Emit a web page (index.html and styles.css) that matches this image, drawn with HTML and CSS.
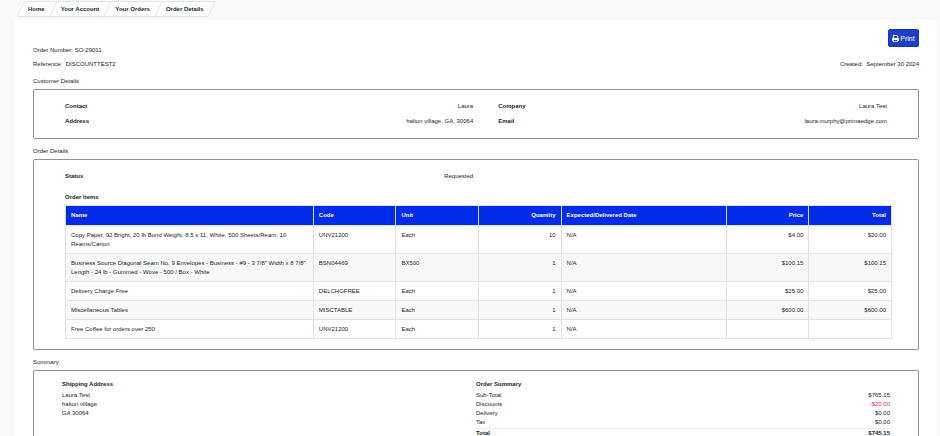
FILE: index.html
```html
<!DOCTYPE html>
<html lang="en">
<head>
  <meta charset="UTF-8" />
  <meta name="viewport" content="width=device-width, initial-scale=1.0"/>
  <title>Order Details</title>
  <link rel="stylesheet" href="styles.css">
</head>
<body>
  <nav class="breadcrumb">
    <a href="#">Home</a>
    <a href="#">Your Account</a>
    <a href="#">Your Orders</a>
    <a href="#">Order Details</a>
  </nav>

  <main class="page">
    <div class="toolbar">
      <button type="button" class="print-btn">
        <svg viewBox="0 0 16 16" fill="currentColor">
          <path fill-rule="evenodd" d="M2 7V2q0-2 2-2h7.500L14 2.500V7h-2V3.500L10.500 2H4v5zM2 7h12q2 0 2 2v4h-2v3H2v-3H0V9q0-2 2-2zm2 4.500V14h8v-2.500z"/>
        </svg>
        Print
      </button>
    </div>

    <div class="order-info">
      <div>Order Number: SO-29011</div>
      <div class="info-row">
        <span>Reference: &nbsp;DISCOUNTTEST2</span>
        <span>Created: &nbsp;September 30 2024</span>
      </div>
    </div>

    <h2 class="section-title">Customer Details</h2>
    <section class="box customer">
      <dl class="details">
        <div><dt>Contact</dt><dd>Laura</dd></div>
        <div><dt>Company</dt><dd>Laura Test</dd></div>
        <div><dt>Address</dt><dd>halton village, GA, 30064</dd></div>
        <div><dt>Email</dt><dd>laura.murphy@primaedge.com</dd></div>
      </dl>
    </section>

    <h2 class="section-title">Order Details</h2>
    <section class="box order">
      <dl class="details">
        <div><dt>Status</dt><dd>Requested</dd></div>
      </dl>
      <h3 class="items-title">Order Items</h3>
      <table class="items">
        <thead>
          <tr>
            <th class="col-name">Name</th>
            <th>Code</th>
            <th>Unit</th>
            <th class="num">Quantity</th>
            <th class="col-date">Expected/Delivered Date</th>
            <th class="num">Price</th>
            <th class="num">Total</th>
          </tr>
        </thead>
        <tbody>
          <tr>
            <td>Copy Paper, 92 Bright, 20 lb Bond Weight, 8.5 x 11, White, 500 Sheets/Ream, 10 Reams/Carton</td>
            <td>UNV21200</td>
            <td>Each</td>
            <td class="num">10</td>
            <td>N/A</td>
            <td class="num">$4.00</td>
            <td class="num">$20.00</td>
          </tr>
          <tr>
            <td>Business Source Diagonal Seam No. 9 Envelopes - Business - #9 - 3 7/8" Width x 8 7/8" Length - 24 lb - Gummed - Wove - 500 / Box - White</td>
            <td>BSN04469</td>
            <td>BX500</td>
            <td class="num">1</td>
            <td>N/A</td>
            <td class="num">$100.15</td>
            <td class="num">$100.15</td>
          </tr>
          <tr>
            <td>Delivery Charge Free</td>
            <td>DELCHGFREE</td>
            <td>Each</td>
            <td class="num">1</td>
            <td>N/A</td>
            <td class="num">$25.00</td>
            <td class="num">$25.00</td>
          </tr>
          <tr>
            <td>Miscellaneous Tables</td>
            <td>MISCTABLE</td>
            <td>Each</td>
            <td class="num">1</td>
            <td>N/A</td>
            <td class="num">$600.00</td>
            <td class="num">$600.00</td>
          </tr>
          <tr>
            <td>Free Coffee for orders over 250</td>
            <td>UNV21200</td>
            <td>Each</td>
            <td class="num">1</td>
            <td>N/A</td>
            <td class="num"></td>
            <td class="num"></td>
          </tr>
        </tbody>
      </table>
    </section>

    <h2 class="section-title">Summary</h2>
    <section class="box summary">
      <div>
        <h3>Shipping Address</h3>
        <address>Laura Test<br/>halton village<br/>GA 30064</address>
      </div>
      <div>
        <h3>Order Summary</h3>
        <dl class="totals">
          <div><dt>Sub-Total</dt><dd>$765.15</dd></div>
          <div><dt>Discounts</dt><dd class="discount">-$20.00</dd></div>
          <div><dt>Delivery</dt><dd>$0.00</dd></div>
          <div><dt>Tax</dt><dd>$0.00</dd></div>
          <div class="grand"><dt>Total</dt><dd>$745.15</dd></div>
        </dl>
      </div>
    </section>
  </main>
</body>
</html>
```

FILE: styles.css
```css
* {
  box-sizing: border-box;
}

body {
  margin: 0;
  padding: 1px 2px 0 14px;
  height: 100vh;
  overflow: hidden;
  font-family: "Liberation Sans", Arial, sans-serif;
  font-size: 6px;
  line-height: 9px;
  color: #212529;
  background: #f8f9fb;
}

h2, h3, dl, dt, dd {
  margin: 0;
  font-size: 6px;
}

/* breadcrumb */
.breadcrumb {
  display: flex;
  padding-left: 6px;
  height: 19px;
}

.breadcrumb a {
  position: relative;
  z-index: 0;
  height: 16px;
  padding: 0 8px;
  line-height: 16px;
  font-weight: bold;
  color: #212529;
  text-decoration: none;
}

.breadcrumb a::before {
  content: "";
  position: absolute;
  z-index: -1;
  inset: 0;
  background: #fff;
  border: 1px solid #dfe2e6;
  border-right: none;
  transform: skewX(-25deg);
}

.breadcrumb a:first-child::before {
  border-radius: 4px 0 0 2px;
}

.breadcrumb a:last-child::before {
  border-right: 1px solid #dfe2e6;
}

/* main panel */
.page {
  padding: 9px 19px 20px;
  background: #fff;
}

.toolbar {
  display: flex;
  justify-content: flex-end;
}

.print-btn {
  display: flex;
  align-items: center;
  justify-content: center;
  gap: 1px;
  width: 31px;
  height: 18px;
  padding: 0;
  font-family: inherit;
  font-size: 7px;
  color: #fff;
  background: #1d3fc4;
  border: 1px solid #1236b8;
  border-radius: 2px;
}

.print-btn svg {
  width: 7px;
  height: 7px;
}

.order-info {
  display: grid;
  gap: 5px;
  margin-top: -1px;
}

.info-row {
  display: flex;
  justify-content: space-between;
}

.section-title {
  margin: 8px 0 3px;
  font-weight: normal;
}

.box {
  border: 1px solid #8f9296;
  border-radius: 2px;
}

.customer,
.order {
  padding: 12px 26px 10px 31px;
}

.customer {
  padding-bottom: 12px;
}

.details {
  display: grid;
  grid-template-columns: 21fr 20fr;
  gap: 6px 25px;
  padding-right: 5px;
}

.details div,
.totals div {
  display: flex;
  justify-content: space-between;
}

dt {
  font-weight: bold;
}

/* order items */
.items-title {
  margin: 12px 0 3px;
}

.items {
  width: 100%;
  table-layout: fixed;
  border-collapse: collapse;
}

.items th,
.items td {
  width: 10%;
  padding: 5px 5px 4px;
  text-align: left;
  vertical-align: top;
  border: 1px solid #dee2e6;
}

.items th {
  height: 20px;
  color: #fff;
  background: #002be8;
}

.items .col-name {
  width: 30%;
}

.items .col-date {
  width: 20%;
}

.items .num {
  text-align: right;
}

.items tbody tr:nth-child(even) {
  background: #f8f8f8;
}

/* summary */
.summary {
  display: grid;
  grid-template-columns: 1fr 1fr;
  padding: 9px 28px 20px;
}

.summary h3 {
  margin-bottom: 2px;
}

.summary address {
  font-style: normal;
}

.totals dt {
  font-weight: normal;
}

.totals .discount {
  color: #dc3545;
}

.totals .grand {
  margin-top: 1px;
  border-top: 1px solid #eeeff0;
}

.totals .grand dt,
.totals .grand dd {
  font-weight: bold;
}
```
